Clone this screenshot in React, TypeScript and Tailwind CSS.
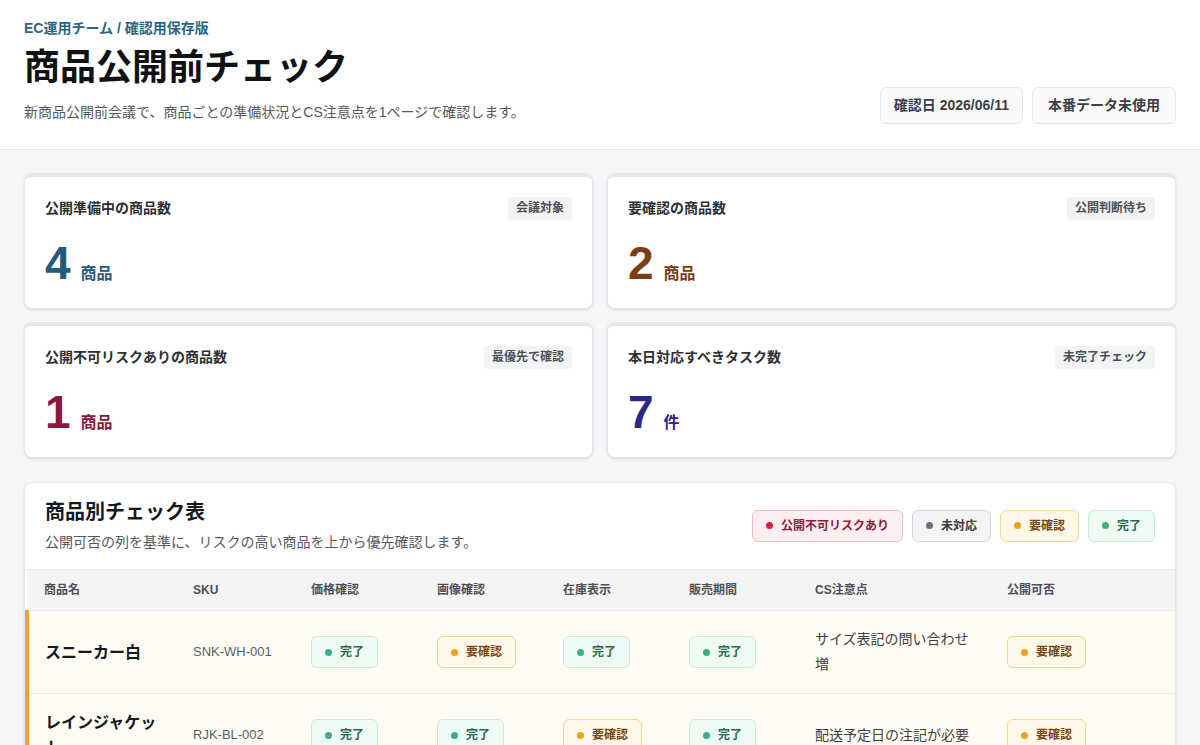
import React from 'react';

type Status = 'risk' | 'todo' | 'check' | 'done';

const STATUS_STYLE: Record<Status, { label: string; box: string; dot: string }> = {
  risk: { label: '公開不可リスクあり', box: 'bg-[#fdeef1] border-[#f1b9c4] text-[#8f1d3a]', dot: 'bg-[#d81f45]' },
  todo: { label: '未対応', box: 'bg-[#f3f4f6] border-[#d4d6da] text-[#3a3d44]', dot: 'bg-[#6b7078]' },
  check: { label: '要確認', box: 'bg-[#fff8e8] border-[#f2d88e] text-[#7a4514]', dot: 'bg-[#eba222]' },
  done: { label: '完了', box: 'bg-[#eefaf4] border-[#c9ecd9] text-[#2c6a4c]', dot: 'bg-[#3fae7c]' },
};

const SUMMARY = [
  { label: '公開準備中の商品数', chip: '会議対象', value: 4, unit: '商品', color: 'text-[#245b7b]' },
  { label: '要確認の商品数', chip: '公開判断待ち', value: 2, unit: '商品', color: 'text-[#7b3d14]' },
  { label: '公開不可リスクありの商品数', chip: '最優先で確認', value: 1, unit: '商品', color: 'text-[#8a1838]' },
  { label: '本日対応すべきタスク数', chip: '未完了チェック', value: 7, unit: '件', color: 'text-[#2b2785]' },
];

interface Product {
  name: string;
  sku: string;
  price: Status;
  image: Status;
  stock: Status;
  period: Status;
  note: string;
  publish: Status;
}

const PRODUCTS: Product[] = [
  { name: 'スニーカー白', sku: 'SNK-WH-001', price: 'done', image: 'check', stock: 'done', period: 'done', note: 'サイズ表記の問い合わせ増', publish: 'check' },
  { name: 'レインジャケット', sku: 'RJK-BL-002', price: 'done', image: 'done', stock: 'check', period: 'done', note: '配送予定日の注記が必要', publish: 'check' },
  { name: 'レザー財布', sku: 'LWT-BR-003', price: 'todo', image: 'done', stock: 'done', period: 'risk', note: '販売開始日が未確定', publish: 'risk' },
  { name: 'キャンバストート', sku: 'CTB-NV-004', price: 'done', image: 'done', stock: 'done', period: 'done', note: '特になし', publish: 'done' },
];

// row background + left accent colour, keyed by 公開可否
const ROW_BG: Record<Status, string> = {
  risk: 'bg-[#fff6f7]',
  check: 'bg-[#fffcf3]',
  todo: 'bg-white',
  done: 'bg-white',
};
const ROW_ACCENT: Record<Status, string> = {
  risk: 'border-l-[#d81f45]',
  check: 'border-l-[#e9a33a]',
  todo: 'border-l-[#9ca3af]',
  done: 'border-l-transparent',
};

function Badge({ status }: { status: Status }) {
  const s = STATUS_STYLE[status];
  return (
    <span className={`inline-flex h-8 items-center gap-2 rounded-md border px-[13px] text-[12px] font-bold whitespace-nowrap ${s.box}`}>
      <span className={`h-[7px] w-[7px] rounded-full ${s.dot}`} />
      {s.label}
    </span>
  );
}

function SummaryCard({ item }: { item: (typeof SUMMARY)[number] }) {
  return (
    <div className="rounded-lg border border-gray-200 border-t-4 border-t-[#e6e8eb] bg-white px-5 pt-5 pb-[22px] shadow-sm">
      <div className="flex items-center justify-between">
        <span className="text-[14px] font-bold text-[#2d2f33]">{item.label}</span>
        <span className="rounded bg-[#f2f3f5] px-2 py-[3px] text-[12px] font-bold leading-[17px] text-[#4b4f56]">
          {item.chip}
        </span>
      </div>
      <div className={`mt-5 flex items-baseline gap-[10px] ${item.color}`}>
        <span className="text-[46px] font-bold leading-none">{item.value}</span>
        <span className="text-[16px] font-bold">{item.unit}</span>
      </div>
    </div>
  );
}

export default function App() {
  return (
    <div
      className="min-h-screen bg-[#f5f6f8] text-[#1f2124]"
      style={{ fontFamily: '"Liberation Sans", "Noto Sans CJK JP", sans-serif' }}
    >
      {/* Header */}
      <header className="flex items-end justify-between border-b border-gray-200 bg-white px-6 pt-[18px] pb-[26px]">
        <div>
          <p className="text-[14px] font-bold leading-[20px] text-[#2d6482]">EC運用チーム / 確認用保存版</p>
          <h1 className="mt-[7px] text-[36px] font-bold leading-[46px] text-[#111]">商品公開前チェック</h1>
          <p className="mt-[10px] text-[14px] leading-[22px] text-[#55595f]">
            新商品公開前会議で、商品ごとの準備状況とCS注意点を1ページで確認します。
          </p>
        </div>
        <div className="mb-[-1px] flex gap-[9px]">
          <span className="flex h-[37px] items-center rounded-md border border-gray-200 bg-[#fafafa] px-[13px] text-[14px] font-bold text-[#3b3e44]">
            確認日 2026/06/11
          </span>
          <span className="flex h-[37px] items-center rounded-md border border-gray-200 bg-[#fafafa] px-[15px] text-[14px] font-bold text-[#3b3e44]">
            本番データ未使用
          </span>
        </div>
      </header>

      <main className="px-6 pt-[23px] pb-10">
        {/* Summary cards */}
        <div className="grid grid-cols-2 gap-x-[14px] gap-y-[13px]">
          {SUMMARY.map(item => (
            <SummaryCard key={item.label} item={item} />
          ))}
        </div>

        {/* Check table */}
        <section className="mt-6 overflow-hidden rounded-lg border border-gray-200 bg-white shadow-sm">
          <div className="flex items-center justify-between px-5 pt-[15px] pb-4">
            <div>
              <h2 className="text-[20px] font-bold leading-[28px] text-[#16181b]">商品別チェック表</h2>
              <p className="mt-[5px] text-[14px] leading-[22px] text-[#55595f]">
                公開可否の列を基準に、リスクの高い商品を上から優先確認します。
              </p>
            </div>
            <div className="flex gap-[9px]">
              <Badge status="risk" />
              <Badge status="todo" />
              <Badge status="check" />
              <Badge status="done" />
            </div>
          </div>

          <table className="w-full table-fixed border-collapse text-left">
            <colgroup>
              <col className="w-[149px]" />
              <col className="w-[118px]" />
              <col className="w-[126px]" />
              <col className="w-[126px]" />
              <col className="w-[126px]" />
              <col className="w-[126px]" />
              <col className="w-[192px]" />
              <col />
            </colgroup>
            <thead>
              <tr className="border-y border-gray-200 bg-[#f4f4f5] text-[12px] font-bold text-[#4d5057]">
                {['商品名', 'SKU', '価格確認', '画像確認', '在庫表示', '販売期間', 'CS注意点', '公開可否'].map(h => (
                  <th key={h} className="py-3 pl-[17px] pr-3 font-bold leading-4">
                    {h}
                  </th>
                ))}
              </tr>
            </thead>
            <tbody>
              {PRODUCTS.map(p => (
                <tr key={p.sku} className={`border-b border-gray-200 ${ROW_BG[p.publish]}`}>
                  <td className={`border-l-4 py-4 pl-4 pr-3 text-[16px] font-bold leading-[25px] text-[#16181b] ${ROW_ACCENT[p.publish]}`}>
                    {p.name}
                  </td>
                  <td className="py-4 pl-[17px] pr-3 text-[13px] text-[#5a5e64]">{p.sku}</td>
                  <td className="py-4 pl-[17px] pr-3"><Badge status={p.price} /></td>
                  <td className="py-4 pl-[17px] pr-3"><Badge status={p.image} /></td>
                  <td className="py-4 pl-[17px] pr-3"><Badge status={p.stock} /></td>
                  <td className="py-4 pl-[17px] pr-3"><Badge status={p.period} /></td>
                  <td className="py-4 pl-[17px] pr-3 text-[14px] leading-[25px] text-[#3d4046]">{p.note}</td>
                  <td className="py-4 pl-[17px] pr-3"><Badge status={p.publish} /></td>
                </tr>
              ))}
            </tbody>
          </table>
        </section>
      </main>
    </div>
  );
}
